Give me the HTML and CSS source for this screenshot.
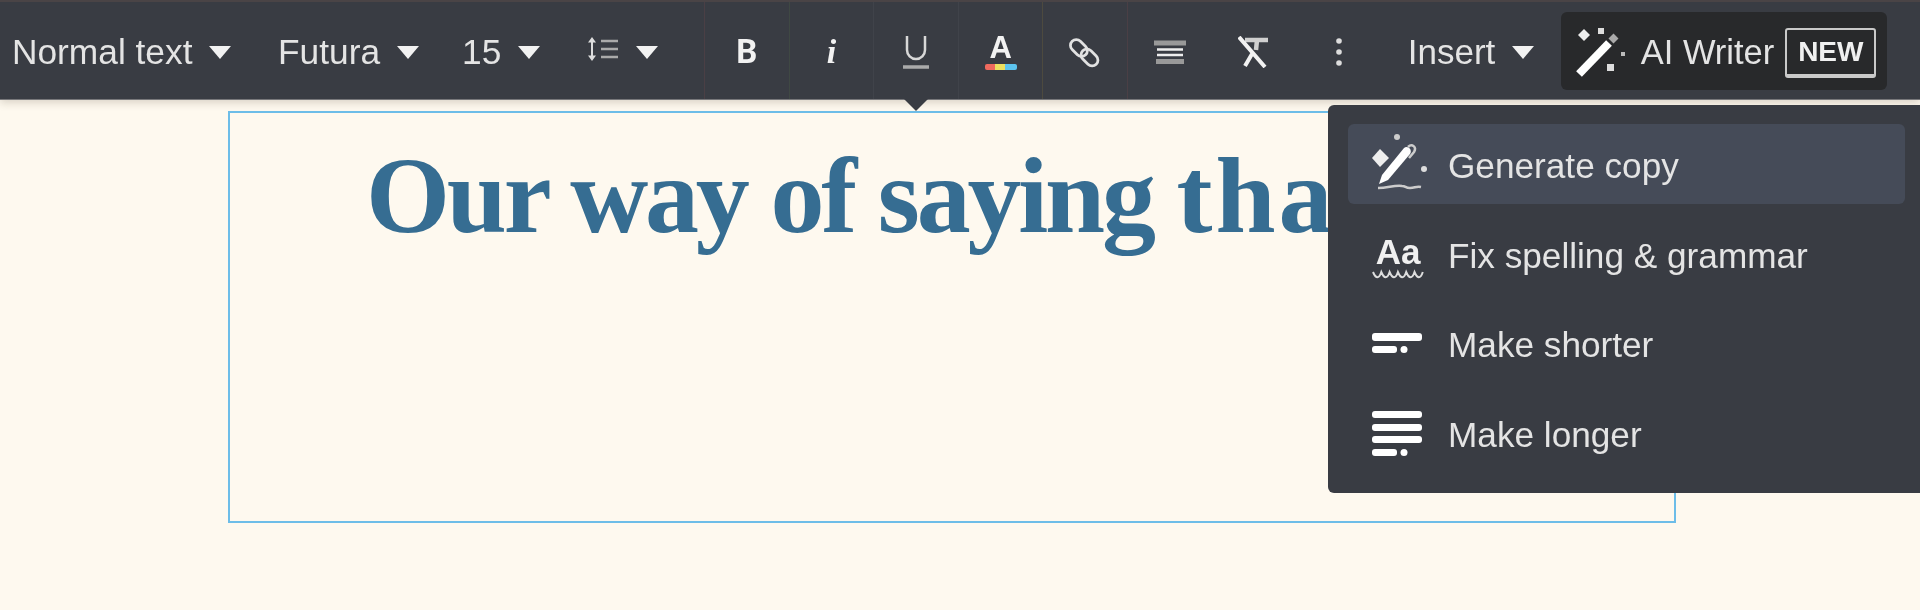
FILE: index.html
```html
<!DOCTYPE html>
<html lang="en">
<head>
<meta charset="utf-8">
<title>Editor</title>
<link rel="stylesheet" href="styles.css">
</head>
<body>
<header class="toolbar">
  <div class="drop w-style"><span>Normal text</span><i class="caret"></i></div>
  <div class="drop w-font"><span>Futura</span><i class="caret"></i></div>
  <div class="drop w-size"><span>15</span><i class="caret"></i></div>
  <div class="drop w-line">
    <svg class="ico-line" width="32" height="26" viewBox="0 0 32 26"><path d="M5 3v20" stroke="#ddd" stroke-width="2" fill="none"/><path d="M1 6.500 5 1l4 5.500zM1 19.500 5 25l4-5.500z" fill="#ddd"/><path d="M14 5h17M14 13h17M14 21h17" stroke="#aaa" stroke-width="2.500"/></svg>
    <i class="caret"></i>
  </div>
  <div class="btn sep-r"><span class="g-b">B</span></div>
  <div class="btn sep-g"><span class="g-i">i</span></div>
  <div class="btn sep-n">
    <svg width="32" height="36" viewBox="0 0 32 36"><path d="M7 2v14a9 9 0 0 0 18 0V2" stroke="#d8d8d8" stroke-width="2.500" fill="none"/><path d="M3 33h26" stroke="#aaa" stroke-width="3.500"/></svg>
  </div>
  <div class="btn sep-n color">
    <span class="g-a">A</span><i class="rainbow"></i>
  </div>
  <div class="btn sep-y">
    <svg width="36" height="34" viewBox="0 0 34 32"><g fill="none" stroke="#e2e2e2" stroke-width="2.600"><rect x="-3" y="-5.500" width="18" height="11" rx="5.500" transform="translate(7 8) rotate(45)"/><rect x="-3" y="-5.500" width="18" height="11" rx="5.500" transform="translate(17 17) rotate(45)"/></g></svg>
  </div>
  <div class="btn sep-r">
    <svg width="32" height="24" viewBox="0 0 32 24"><path d="M0 3h32M2 21.500h28" stroke="#999" stroke-width="5"/><path d="M3 9.500h26M3 15h26" stroke="#eee" stroke-width="2.600"/></svg>
  </div>
  <div class="btn">
    <svg width="32" height="32" viewBox="0 0 32 32"><path d="M7 4h23M19 4l-1 10" stroke="#d0d0d0" stroke-width="4.500" fill="none"/><path d="M1 1l26 30M14 18 7 30" stroke="#f2f2f2" stroke-width="4" fill="none"/></svg>
  </div>
  <div class="btn">
    <svg width="8" height="32" viewBox="0 0 8 32"><circle cx="4" cy="5" r="2.800" fill="#ddd"/><circle cx="4" cy="16" r="2.800" fill="#ddd"/><circle cx="4" cy="27" r="2.800" fill="#ddd"/></svg>
  </div>
  <div class="drop w-insert"><span>Insert</span><i class="caret"></i></div>
  <div class="ai">
    <svg class="wand" width="56" height="52" viewBox="0 0 56 52"><path d="M5 46 35 15" stroke="#fff" stroke-width="8"/><path d="M37 13l5-5" stroke="#aaa" stroke-width="7"/><path d="M10 1l6 6-6 6-6-6z" fill="#eee"/><rect x="24" y="0" width="6" height="6" fill="#ddd"/><rect x="47" y="24" width="4" height="4" fill="#bbb"/><rect x="33" y="36" width="7" height="7" fill="#ddd"/></svg>
    <span class="ai-label">AI Writer</span>
    <span class="new">NEW</span>
  </div>
</header>

<main class="canvas">
  <section class="frame">
    <h1 class="title">Our way of saying <span class="cut">tha</span></h1>
  </section>
</main>

<i class="notch"></i>

<nav class="menu">
  <div class="item active">
    <svg class="ico" width="60" height="60" viewBox="0 0 60 60"><path d="M12 15l9 9-9 9-8-9z" fill="#eee"/><circle cx="29" cy="3" r="3" fill="#ccc"/><path d="M11 50l3-9 22-27c3-3 9 1 6 6L20 46z" fill="#fff"/><path d="M40 13c4-4 9 0 6 5l-5 6" stroke="#ccc" stroke-width="2.500" fill="none"/><circle cx="56" cy="35" r="3" fill="#ddd"/><path d="M10 54c10 0 16-3 24-2 4 0 3 2 8 2s6-2 11-1" stroke="#ccc" stroke-width="2.500" fill="none"/></svg>
    <span>Generate copy</span>
  </div>
  <div class="item">
    <div class="ico aa"><span class="aa-t">Aa</span>
      <svg width="52" height="12" viewBox="0 0 52 12"><path d="M1 3c3 7 6 7 8.300 0 3 7 6 7 8.300 0 3 7 6 7 8.300 0 3 7 6 7 8.300 0 3 7 6 7 8.300 0 3 7 6 7 8.300 0" stroke="#ddd" stroke-width="2" fill="none"/></svg>
    </div>
    <span>Fix spelling &amp; grammar</span>
  </div>
  <div class="item">
    <svg class="ico" width="60" height="60" viewBox="0 0 60 60"><g fill="#fff"><rect x="4" y="20" width="50" height="8" rx="3"/><rect x="4" y="33" width="25" height="7" rx="3"/><circle cx="36" cy="36.500" r="3.500"/></g></svg>
    <span>Make shorter</span>
  </div>
  <div class="item">
    <svg class="ico" width="60" height="60" viewBox="0 0 60 60"><g fill="#fff"><rect x="4" y="8" width="50" height="7" rx="3"/><rect x="4" y="21" width="50" height="7" rx="3"/><rect x="4" y="33" width="50" height="7" rx="3"/><rect x="4" y="46" width="25" height="7" rx="3"/><circle cx="36" cy="49.500" r="3.500"/></g></svg>
    <span>Make longer</span>
  </div>
</nav>
</body>
</html>
```

FILE: styles.css
```css
* { box-sizing: border-box; }
html, body { margin: 0; height: 610px; overflow: hidden; }
body {
  position: relative;
  background: #fef9ef;
  font-family: "Liberation Sans", Arial, sans-serif;
  color: #e4e4e4;
  font-size: 35px;
  filter: blur(0.7px);
}
.toolbar {
  display: flex;
  align-items: stretch;
  height: 100px;
  padding-left: 12px;
  background: #393c43;
  border-top: 2px solid #4a4446;
  border-bottom: 1px solid #77777a;
  box-shadow: 0 3px 8px rgba(60, 50, 30, 0.18);
  position: relative;
}
.drop { display: flex; align-items: center; gap: 17px; padding-top: 3px; font-size: 35.300px; }
.drop svg { margin-top: -7px; }
.caret {
  display: block;
  width: 0;
  height: 0;
  border-left: 11.500px solid transparent;
  border-right: 11.500px solid transparent;
  border-top: 13px solid #f2f2f2;
}
.w-style { width: 266px; }
.w-font { width: 184px; }
.w-size { width: 125px; }
.w-line { width: 117px; }
.w-insert { width: 180px; padding-left: 27px; font-size: 35px; }
.btn {
  width: 84.6px;
  display: flex;
  flex-direction: column;
  align-items: center;
  justify-content: center;
  padding-top: 2px;
  border-left: 1px solid transparent;
}
.sep-r { border-left-color: #4a3f45; }
.sep-g { border-left-color: #3f4843; }
.sep-n { border-left-color: #40434a; }
.sep-y { border-left-color: #4d4a3f; }
.g-b { font-family: Roboto, sans-serif; font-weight: 700; font-size: 33px; color: #f2f2f2; line-height: 1; }
.g-i { font-family: "Liberation Serif", serif; font-weight: 700; font-style: italic; font-size: 34px; color: #f2f2f2; line-height: 1; }
.g-a { font-family: "Liberation Sans", sans-serif; font-weight: 700; font-size: 31px; color: #f2f2f2; line-height: 28px; }
.rainbow {
  display: block;
  width: 32px;
  height: 6px;
  margin-top: 2px;
  border-radius: 2px;
  background: linear-gradient(90deg, #ef6a5e 0 30%, #ece05f 30% 62%, #5cc3ee 62%);
}
.ai {
  width: 326px;
  height: 78px;
  margin-top: 10px;
  display: flex;
  align-items: center;
  padding: 3px 0 0 13px;
  background: #28292b;
  border-radius: 6px;
}
.wand { flex: none; margin-top: 3px; }
.ai-label { margin-left: 11px; white-space: nowrap; font-size: 34.500px; }
.new {
  margin-left: 11px;
  width: 91px;
  height: 50px;
  display: flex;
  align-items: center;
  justify-content: center;
  border: 2px solid #c9c9c9;
  border-bottom-width: 4px;
  border-radius: 3px;
  font-weight: 700;
  font-size: 28px;
  color: #f0f0f0;
}
.canvas { padding: 11px 0 0 228px; }
.frame {
  width: 1448px;
  height: 412px;
  border: 2px solid #6dbde8;
  padding: 25px 0 0 136px;
}
.title {
  margin: 0;
  white-space: nowrap;
  font-family: "Liberation Serif", serif;
  font-weight: 700;
  font-size: 108px;
  letter-spacing: -3.2px;
  line-height: 115px;
  color: #366d92;
}
.cut { letter-spacing: 3px; }
.notch {
  position: absolute;
  left: 904px;
  top: 99px;
  width: 0;
  height: 0;
  border-left: 12px solid transparent;
  border-right: 12px solid transparent;
  border-top: 12px solid #393c43;
}
.menu {
  position: absolute;
  top: 105px;
  left: 1328px;
  width: 592px;
  height: 388px;
  padding: 19px 15px 0 20px;
  display: flex;
  flex-direction: column;
  gap: 9.5px;
  background: #393c43;
  border-radius: 6px 0 0 6px;
}
.item {
  height: 80px;
  display: flex;
  align-items: center;
  gap: 20px;
  padding-left: 20px;
  border-radius: 6px;
  font-size: 35.200px;
}
.item > span { padding-top: 4px; }
.item.active { background: #454b58; }
.ico { flex: none; width: 60px; }
.aa { display: flex; flex-direction: column; align-items: center; padding-top: 7px; }
.aa-t { font-size: 35px; font-weight: 700; line-height: 35px; color: #f0f0f0; }
.aa svg { display: block; }
```
